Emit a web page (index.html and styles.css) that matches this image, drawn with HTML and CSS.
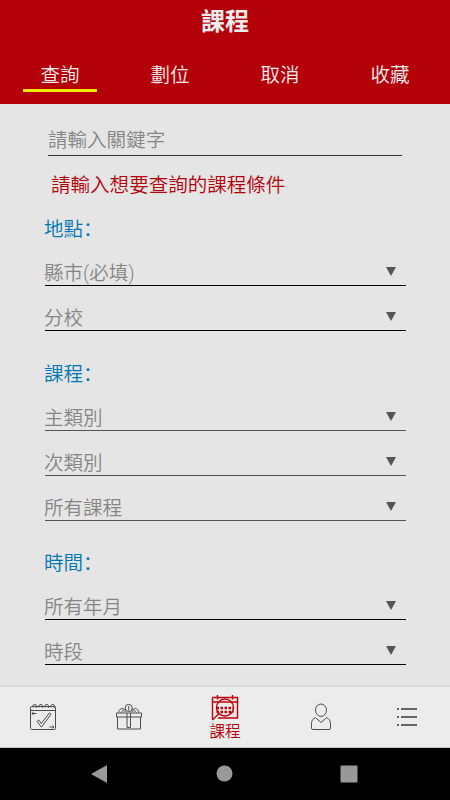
FILE: index.html
```html
<!DOCTYPE html>
<html lang="zh-CN">
<head>
    <meta charset="UTF-8">
    <meta name="viewport" content="width=device-width, initial-scale=1.0">
    <title>課程</title>
    <link rel="stylesheet" href="styles.css">
</head>
<body>
    <div class="app">
        <header class="header">
            <h1>課程</h1>
            <nav class="tabs">
                <a class="tab active">查詢</a>
                <a class="tab">劃位</a>
                <a class="tab">取消</a>
                <a class="tab">收藏</a>
            </nav>
        </header>

        <main class="content">
            <div class="search">請輸入關鍵字</div>
            <p class="hint">請輸入想要查詢的課程條件</p>

            <section class="group first">
                <h2>地點：</h2>
                <div class="field"><span>縣市(必填)</span><i class="arrow"></i></div>
                <div class="field"><span>分校</span><i class="arrow"></i></div>
            </section>

            <section class="group">
                <h2>課程：</h2>
                <div class="field soft"><span>主類別</span><i class="arrow"></i></div>
                <div class="field soft"><span>次類別</span><i class="arrow"></i></div>
                <div class="field soft"><span>所有課程</span><i class="arrow"></i></div>
            </section>

            <section class="group last">
                <h2>時間：</h2>
                <div class="field"><span>所有年月</span><i class="arrow"></i></div>
                <div class="field"><span>時段</span><i class="arrow"></i></div>
            </section>
        </main>

        <nav class="bottom-nav">
            <a class="nav-item">
                <svg width="28" height="28" viewBox="0 0 28 28">
                    <rect x="1.5" y="3.5" width="25" height="23" rx="1"/>
                    <path d="M1.5 7.5h25"/>
                    <path d="M4 4.500a2 2 0 1 1 3 .5M10 4.500a2 2 0 1 1 3 .5M16 4.500a2 2 0 1 1 3 .5M22 4.500a2 2 0 1 1 3 .5"/>
                    <path d="M7.500 10.500H3M4.500 9L3 10.500 4.500 12M20.500 24H25M23.500 22.500L25 24 23.500 25.500"/>
                    <path d="M8 18.500l1.700-1.500 2.600 3.500 8-10.500 1.700 1.200-9.500 13z"/>
                </svg>
            </a>
            <a class="nav-item">
                <svg width="28" height="28" viewBox="0 0 28 28">
                    <path d="M1.500 10h25v4h-25zM2.500 14v12h23V14M12 10v14.500h3.500V10"/>
                    <circle cx="13.700" cy="5" r="3.600"/>
                    <path d="M13.700 3v4.500M10.500 7C7 4.500 4.500 5.500 3.500 9.500M17 7c3.500-2.500 6-1.500 7 2.500M6 9.500c1-2 3.500-2.500 5-.5M21.500 9.500c-1-2-3.500-2.500-5-.5"/>
                </svg>
            </a>
            <a class="nav-item current">
                <svg width="28" height="28" viewBox="0 0 28 28">
                    <path d="M1.500 3.500h25V24H7M1.500 3.500v22M1.500 8h25"/>
                    <path d="M6.500 1v4.500M21.500 1v4.500"/>
                    <circle cx="14" cy="13.500" r="8.500"/>
                    <path d="M8 19.500L1.500 26"/>
                    <path class="dots" d="M5.500 14h17M5.500 18h17"/>
                </svg>
                <span>課程</span>
            </a>
            <a class="nav-item">
                <svg width="28" height="28" viewBox="0 0 28 28">
                    <ellipse cx="14" cy="7.200" rx="5.500" ry="6.200"/>
                    <path d="M8.500 14.700L14 19.500l5.500-4.800c2.600.8 4 3 4 6v4.300a1.500 1.500 0 0 1-1.500 1.500H6A1.500 1.500 0 0 1 4.500 25v-4.300c0-3 1.400-5.200 4-6z"/>
                </svg>
            </a>
            <a class="nav-item">
                <svg class="menu-icon" width="28" height="28" viewBox="0 0 28 28">
                    <path d="M4 6h2M8 6h16M4 14h2M8 14h16M4 22h2M8 22h16"/>
                </svg>
            </a>
        </nav>

        <div class="system-bar">
            <svg width="18" height="20" viewBox="0 0 18 20"><path d="M1 10L17 1v18z"/></svg>
            <svg width="18" height="20" viewBox="0 0 18 20"><circle cx="9.500" cy="9.500" r="8"/></svg>
            <svg width="18" height="20" viewBox="0 0 18 20"><rect x=".5" y="1.500" width="17" height="17" rx="1.200"/></svg>
        </div>
    </div>
</body>
</html>
```

FILE: styles.css
```css
* {
    box-sizing: border-box;
}
body {
    margin: 0;
    font-family: Roboto, "Noto Sans CJK SC", sans-serif;
    font-size: 19.55px;
    font-weight: 350;
    background: #e5e5e5;
}
.app {
    display: flex;
    flex-direction: column;
    width: 450px;
    height: 800px;
    overflow: hidden;
}
.header {
    height: 104px;
    background: #b40008;
    color: #ededed;
}
h1 {
    margin: 0;
    height: 60px;
    font-size: 24px;
    font-weight: 700;
    line-height: 45px;
    text-align: center;
}
.tabs {
    display: flex;
    padding: 0 5px;
}
.tab {
    width: 110px;
    height: 32px;
    line-height: 32px;
    text-align: center;
}
.tab.active {
    width: 74px;
    margin: 0 18px;
    border-bottom: 3px solid #f0ec00;
}
.content {
    flex: 1;
    padding: 20px 44px 0 45px;
}
.search {
    width: 354px;
    height: 32px;
    margin-left: 3px;
    line-height: 34px;
    color: #858585;
    border-bottom: 1px solid #333;
}
.hint {
    margin: 15px 0 0 6px;
    line-height: 30px;
    color: #b40008;
}
.group h2 {
    margin: 0;
    height: 55px;
    padding-top: 29px;
    font-size: 19.55px;
    font-weight: 350;
    line-height: 30px;
    text-indent: -1px;
    color: #0076b3;
}
.group.first h2 {
    height: 40px;
    padding-top: 14px;
}
.group.last h2 {
    height: 54px;
    padding-top: 28px;
}
.field {
    display: flex;
    justify-content: space-between;
    height: 45px;
    padding: 18px 10px 0 0;
    line-height: 30px;
    text-indent: -1px;
    color: #858585;
    border-bottom: 1px solid #000;
}
.field.soft {
    border-color: #555;
}
.arrow {
    height: 9px;
    margin-top: 8px;
    border: 5px solid transparent;
    border-top: 9px solid #555;
    border-bottom: 0;
}
.bottom-nav {
    display: grid;
    grid-template-columns: 86px 86px 106px 86px 86px;
    height: 63px;
    background: #ececec;
    border-top: 2px solid #d8d8d8;
    border-bottom: 1px solid #c4c4c4;
}
.nav-item {
    display: flex;
    flex-direction: column;
    align-items: center;
    padding-top: 16px;
}
.nav-item svg {
    fill: none;
    stroke: #4c4c4c;
    stroke-width: 1;
}
.nav-item.current {
    padding-top: 7px;
    color: #b40008;
    font-size: 15.5px;
    line-height: 20px;
}
.nav-item.current svg {
    stroke: #c00008;
    stroke-width: 1.4;
}
.nav-item .dots {
    stroke-width: 2.5;
    stroke-dasharray: 2.5 1.5;
}
.nav-item .menu-icon {
    stroke: #666;
    stroke-width: 2;
}
.system-bar {
    display: flex;
    justify-content: space-between;
    align-items: center;
    height: 52px;
    padding: 0 92px 0 90px;
    background: #000;
}
.system-bar svg {
    fill: #999;
}
```
